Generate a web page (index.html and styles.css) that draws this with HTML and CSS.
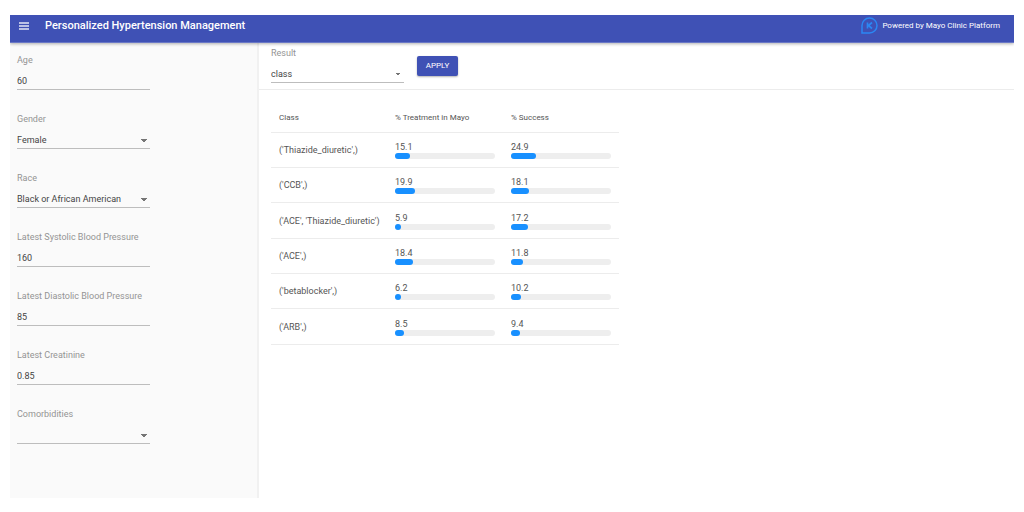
FILE: index.html
```html
<!DOCTYPE html>
<html lang="en">
<head>
<meta charset="utf-8">
<title>Personalized Hypertension Management</title>
<link rel="stylesheet" href="styles.css">
</head>
<body>
<div class="app">
  <header class="topbar">
    <button class="menu" type="button" aria-label="Menu">
      <svg width="10" height="8" viewBox="0 0 10 8"><path d="M0 1h10M0 4h10M0 7h10" stroke="currentColor" stroke-width="1.3"/></svg>
    </button>
    <h1 class="title">Personalized Hypertension Management</h1>
    <div class="powered">
      <svg class="logo" width="17" height="17" viewBox="0 0 17 17" fill="none" stroke="#2b87f3"><path d="M1 16V8.500A7.500 7.500 0 1 1 8.500 16Z" stroke-width="1.500"/><path d="M6.500 5.500v6M11 5.500l-3.500 3 3.500 3" stroke-width="1.700"/></svg>
      <span>Powered by Mayo Clinic Platform</span>
    </div>
  </header>
  <div class="body">
    <form class="sidebar">
      <div class="field"><label for="age">Age</label><input class="control" id="age" type="text" value="60"></div>
      <div class="field"><label for="gender">Gender</label><select class="control" id="gender"><option>Female</option></select></div>
      <div class="field"><label for="race">Race</label><select class="control" id="race"><option>Black or African American</option></select></div>
      <div class="field"><label for="systolic">Latest Systolic Blood Pressure</label><input class="control" id="systolic" type="text" value="160"></div>
      <div class="field"><label for="diastolic">Latest Diastolic Blood Pressure</label><input class="control" id="diastolic" type="text" value="85"></div>
      <div class="field"><label for="creatinine">Latest Creatinine</label><input class="control" id="creatinine" type="text" value="0.85"></div>
      <div class="field"><label for="comorbidities">Comorbidities</label><select class="control" id="comorbidities"><option></option></select></div>
    </form>
    <main class="main">
      <div class="toolbar">
        <div class="field"><label for="result">Result</label><select class="control" id="result"><option>class</option></select></div>
        <button class="apply" type="button">APPLY</button>
      </div>
      <table class="results">
        <thead><tr><th>Class</th><th>% Treatment in Mayo</th><th>% Success</th></tr></thead>
        <tbody>
          <tr><td>('Thiazide_diuretic',)</td><td>15.1<div class="bar"><div class="fill" style="width:15.1%"></div></div></td><td>24.9<div class="bar"><div class="fill" style="width:24.9%"></div></div></td></tr>
          <tr><td>('CCB',)</td><td>19.9<div class="bar"><div class="fill" style="width:19.9%"></div></div></td><td>18.1<div class="bar"><div class="fill" style="width:18.1%"></div></div></td></tr>
          <tr><td>('ACE', 'Thiazide_diuretic')</td><td>5.9<div class="bar"><div class="fill" style="width:5.9%"></div></div></td><td>17.2<div class="bar"><div class="fill" style="width:17.2%"></div></div></td></tr>
          <tr><td>('ACE',)</td><td>18.4<div class="bar"><div class="fill" style="width:18.4%"></div></div></td><td>11.8<div class="bar"><div class="fill" style="width:11.8%"></div></div></td></tr>
          <tr><td>('betablocker',)</td><td>6.2<div class="bar"><div class="fill" style="width:6.2%"></div></div></td><td>10.2<div class="bar"><div class="fill" style="width:10.2%"></div></div></td></tr>
          <tr><td>('ARB',)</td><td>8.5<div class="bar"><div class="fill" style="width:8.5%"></div></div></td><td>9.4<div class="bar"><div class="fill" style="width:9.4%"></div></div></td></tr>
        </tbody>
      </table>
    </main>
  </div>
</div>
</body>
</html>
```
FILE: styles.css
```css
* {
  box-sizing: border-box;
}

body {
  margin: 0;
  padding: 15px 10px 14px;
  height: 100vh;
  background: #fff;
  color: #555;
  font-family: Roboto, "Liberation Sans", sans-serif;
  font-size: 9px;
}

.app {
  display: flex;
  flex-direction: column;
  height: 100%;
}

.topbar {
  position: relative;
  display: flex;
  align-items: center;
  flex: none;
  padding: 0 14px 6px 9px;
  height: 28px;
  background: #3f51b5;
  border-bottom: 1px solid #6a78c6;
  box-shadow: 0 1px 3px rgba(0, 0, 0, 0.3);
  clip-path: inset(0 0 -4px 0);
  color: #fff;
}

.menu {
  display: flex;
  margin: 0;
  padding: 0;
  border: 0;
  background: none;
  color: #e3e6f5;
}

.title {
  margin: 0 0 0 16px;
  font-size: 11px;
  line-height: 16px;
  font-weight: 500;
}

.powered {
  display: flex;
  align-items: center;
  gap: 4px;
  margin-left: auto;
  font-size: 8px;
  line-height: 16px;
  font-weight: 400;
}

.body {
  display: flex;
  flex: 1;
}

.sidebar {
  display: flex;
  flex-direction: column;
  gap: 21px;
  flex: none;
  width: 249px;
  padding: 9px 7px;
  background: #fafafa;
  border-right: 2px solid #f1f1f1;
}

.field {
  display: flex;
  flex-direction: column;
  gap: 5px;
  width: 133px;
}

.field label {
  line-height: 16px;
  color: #949494;
}

.control {
  appearance: none;
  width: 100%;
  height: 17px;
  margin: 0;
  padding: 0;
  border: 0;
  border-bottom: 1px solid #bdbdbd;
  border-radius: 0;
  outline: 0;
  background: transparent;
  color: #444;
  font: inherit;
  line-height: 16px;
}

select.control {
  background: conic-gradient(from 315deg at 50% 100%, #757575 90deg, transparent 0) right 3px center / 6px 3px no-repeat;
}

.main {
  flex: 1;
  background: #fff;
}

.toolbar {
  display: flex;
  align-items: flex-end;
  gap: 13px;
  padding: 2px 12px 6px;
  border-bottom: 1px solid #ececec;
}

.apply {
  width: 41px;
  height: 20px;
  margin: 0 0 7px;
  padding: 0;
  border: 0;
  border-radius: 2px;
  background: #3f51b5;
  box-shadow: 0 1px 2px rgba(0, 0, 0, 0.3);
  color: #fff;
  font: 8px/20px Roboto, "Liberation Sans", sans-serif;
}

.results {
  width: 348px;
  margin: 13px 12px 0;
  border-collapse: separate;
  border-spacing: 0;
  table-layout: fixed;
}

.results th,
.results td {
  padding: 0 8px;
  border-bottom: 1px solid #ececec;
  text-align: left;
  line-height: 12px;
  white-space: nowrap;
}

.results th {
  height: 30px;
  font-size: 8px;
  font-weight: 400;
}

.results td {
  height: 35px;
}

.results tr:nth-child(3n) td {
  height: 36px;
}

.bar {
  height: 6px;
  border-radius: 3px;
  background: #eee;
}

.fill {
  height: 100%;
  border-radius: 3px;
  background: #1890ff;
}
```
